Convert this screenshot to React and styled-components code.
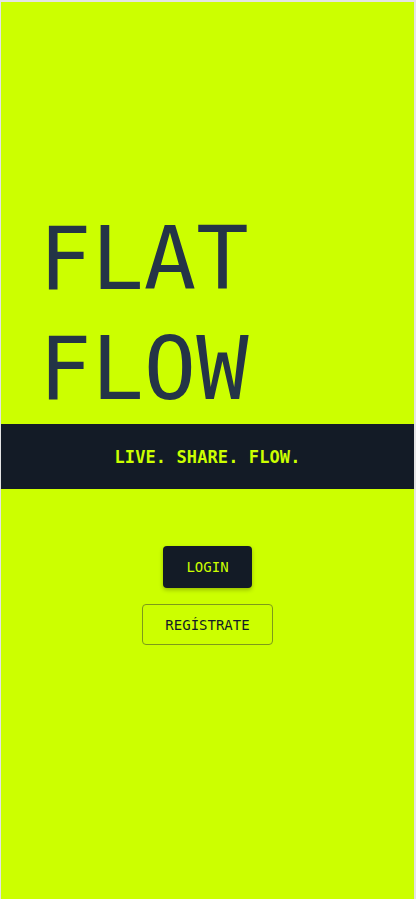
import styled, { createGlobalStyle } from 'styled-components';

const GlobalStyle = createGlobalStyle`
  html, body {
    margin: 0;
    padding: 0;
    background: #e4e4e4;
  }
  #root {
    min-height: 100vh;
  }
`

const Page = styled.div`
  margin: 2px 2px 0 1px;
  min-height: calc(100vh - 2px);
  background: #ccff00;
  display: flex;
  flex-direction: column;
  font-family: "DejaVu Sans Mono", "Liberation Mono", monospace;
`

const Hero = styled.div`
  padding: 202px 0 0 38px;
`

const Title = styled.h1`
  margin: 0;
  font-size: 87px;
  line-height: 110px;
  font-weight: 400;
  color: #243447;
  &>span {
    display: block;
  }
`

const Band = styled.div`
  background: #131b26;
  height: 65px;
  display: flex;
  align-items: center;
  justify-content: center;
  color: #ccff00;
  font-weight: bold;
  font-size: 17px;
  letter-spacing: 0.1px;
`

const Actions = styled.div`
  margin-top: 57px;
  display: flex;
  flex-direction: column;
  align-items: center;
  gap: 16px;
`

const Button = styled.button`
  font-family: inherit;
  font-size: 14px;
  line-height: 18px;
  border-radius: 4px;
  cursor: pointer;
  height: ${({outline})=>outline?'41px':'42px'};
  padding: ${({outline})=>outline?'0 22px':'0 23px'};
  background: ${({outline})=>outline?'transparent':'#131b26'};
  color: ${({outline})=>outline?'#131b26':'#ccff00'};
  border: ${({outline})=>outline?'1px solid #7d9a1a':'none'};
  box-shadow: ${({outline})=>outline?'none':'0 2px 4px rgba(0,0,0,0.25)'};
`

const App = () => {
  return (
    <>
      <GlobalStyle/>
      <Page>
        <Hero>
          <Title>
            <span>FLAT</span>
            <span>FLOW</span>
          </Title>
        </Hero>
        <Band>LIVE. SHARE. FLOW.</Band>
        <Actions>
          <Button>LOGIN</Button>
          <Button outline>REGÍSTRATE</Button>
        </Actions>
      </Page>
    </>
  )
}

export default App
